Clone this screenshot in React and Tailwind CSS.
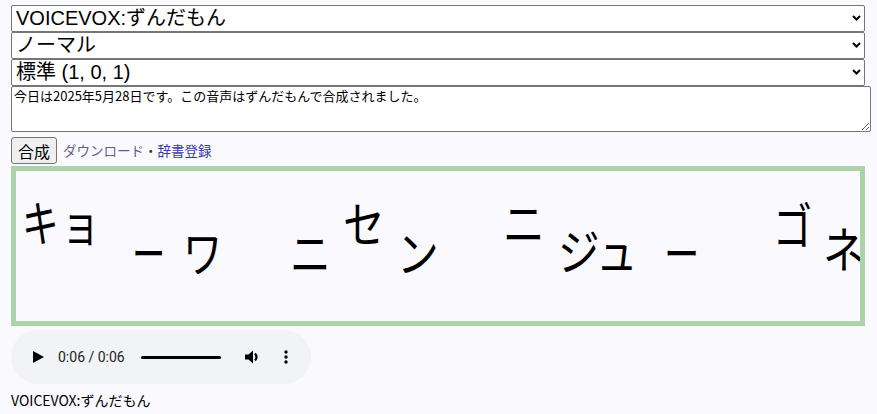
import React from 'react';

const moras = [
  { c: 'キ', x: 6, y: 25, s: 0.75 },
  { c: 'ョ', x: 45, y: 25, s: 0.8 },
  { c: 'ー', x: 116, y: 55, s: 0.68 },
  { c: 'ワ', x: 167, y: 55, s: 0.8 },
  { c: 'ニ', x: 274, y: 55, s: 0.83 },
  { c: 'セ', x: 327, y: 26, s: 0.85 },
  { c: 'ン', x: 381, y: 55, s: 0.85 },
  { c: 'ニ', x: 487, y: 25, s: 0.85 },
  { c: 'ジ', x: 542, y: 53, s: 0.85 },
  { c: 'ュ', x: 580, y: 53, s: 0.85 },
  { c: 'ー', x: 648, y: 55, s: 0.72 },
  { c: 'ゴ', x: 757, y: 27, s: 0.8 },
  { c: 'ネ', x: 807, y: 51, s: 0.85 },
];

function Chevron() {
  return (
    <svg className="absolute right-[4px] top-[10px] w-[9px] h-[6px] pointer-events-none" viewBox="0 0 9 6">
      <path d="M1 1 L4.5 4.5 L8 1" fill="none" stroke="#000" strokeWidth="2" />
    </svg>
  );
}

function Select({ label }) {
  return (
    <div className="relative w-[854px] h-[27px]">
      <select
        className="appearance-none w-full h-full bg-white border border-[#767676] rounded-[2px] pl-[4px] text-[20px] leading-[25px] text-black"
        defaultValue={label}
      >
        <option>{label}</option>
      </select>
      <Chevron />
    </div>
  );
}

function AudioBar() {
  return (
    <div className="w-[300px] h-[54px] rounded-full bg-[#f1f3f4] flex items-center font-['Roboto','Liberation_Sans',sans-serif] text-[#1f1f1f]">
      <svg className="ml-[22px] w-[11px] h-[12px]" viewBox="0 0 11 12">
        <path d="M0 0 L11 6 L0 12 Z" fill="#000" />
      </svg>
      <span className="ml-[14px] text-[14px]">0:06 / 0:06</span>
      <div className="ml-[16px] w-[80px] h-[3px] rounded-full bg-black" />
      <svg className="ml-[24px] w-[17px] h-[14px]" viewBox="0 0 17 14">
        <path d="M0 4.5 H3.5 L8 0.5 V13.5 L3.5 9.5 H0 Z" fill="#000" />
        <path d="M10 3.5 Q13 7 10 10.5" fill="none" stroke="#000" strokeWidth="2.2" />
      </svg>
      <svg className="ml-[22px] w-[4px] h-[14px]" viewBox="0 0 4 14">
        <circle cx="2" cy="2" r="1.7" fill="#000" />
        <circle cx="2" cy="7" r="1.7" fill="#000" />
        <circle cx="2" cy="12" r="1.7" fill="#000" />
      </svg>
    </div>
  );
}

export default function App() {
  return (
    <div className="min-h-[414px] bg-[#f9f9fe] pt-[5px] px-[11px] font-['Liberation_Sans','Noto_Sans_CJK_JP',sans-serif] text-black">
      <Select label="VOICEVOX:ずんだもん" />
      <Select label="ノーマル" />
      <Select label="標準 (1, 0, 1)" />
      <textarea
        className="block w-[860px] h-[46px] bg-white border border-[#767676] rounded-[2px] px-[2px] pt-0 text-[13px] leading-[17px] font-['Noto_Sans_CJK_JP',sans-serif] resize-y"
        defaultValue="今日は2025年5月28日です。この音声はずんだもんで合成されました。"
      />
      <div className="flex items-center mt-[5px] h-[27px]">
        <button className="h-[27px] px-[6px] bg-[#efefef] border border-[#767676] rounded-[3px] text-[16px] leading-[20px] font-['Noto_Sans_CJK_JP',sans-serif]">
          合成
        </button>
        <div className="ml-[6px] text-[13.5px] font-['Noto_Sans_CJK_JP',sans-serif]">
          <a href="#" className="text-[#6a5a8a]">ダウンロード</a>
          <span className="text-[#333]">・</span>
          <a href="#" className="text-[#3c3ca0]">辞書登録</a>
        </div>
      </div>
      <div className="relative mt-[2px] w-[854px] h-[160px] border-[5px] border-[#abd3a7] overflow-hidden font-['Noto_Sans_CJK_JP',sans-serif]">
        {moras.map((m, i) => (
          <span
            key={i}
            className="absolute origin-left text-[49px] leading-[49px]"
            style={{ left: m.x, top: m.y, transform: `scaleX(${m.s})` }}
          >
            {m.c}
          </span>
        ))}
      </div>
      <div className="mt-[4px]">
        <AudioBar />
      </div>
      <div className="mt-[7px] text-[14px] leading-[18px] font-['Noto_Sans_CJK_JP',sans-serif]">
        VOICEVOX:ずんだもん
      </div>
    </div>
  );
}
